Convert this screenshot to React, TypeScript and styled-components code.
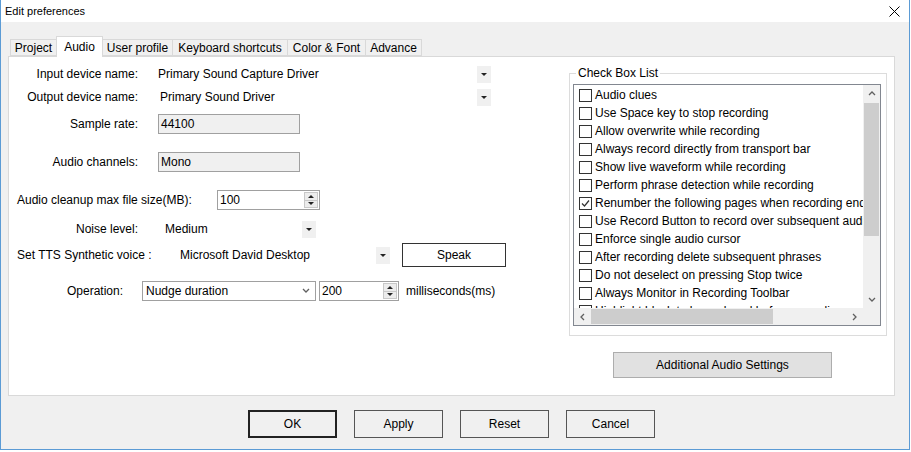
import styled, { createGlobalStyle } from 'styled-components'

const GlobalStyle = createGlobalStyle`
    body {
        margin: 0;
        background: #fff;
        font-family: "Liberation Sans", Arial, sans-serif;
        font-size: 12px;
        color: #000;
    }
`

const checkItems = [
    { label: 'Audio clues', checked: false },
    { label: 'Use Space key to stop recording', checked: false },
    { label: 'Allow overwrite while recording', checked: false },
    { label: 'Always record directly from transport bar', checked: false },
    { label: 'Show live waveform while recording', checked: false },
    { label: 'Perform phrase detection while recording', checked: false },
    { label: 'Renumber the following pages when recording ends', checked: true },
    { label: 'Use Record Button to record over subsequent audio', checked: false },
    { label: 'Enforce single audio cursor', checked: false },
    { label: 'After recording delete subsequent phrases', checked: false },
    { label: 'Do not deselect on pressing Stop twice', checked: false },
    { label: 'Always Monitor in Recording Toolbar', checked: false },
    { label: 'Highlight block to be replaced before recording', checked: false },
]

const tabs = [
    { name: 'Project', width: 47 },
    { name: 'Audio', width: 47, active: true },
    { name: 'User profile', width: 71 },
    { name: 'Keyboard shortcuts', width: 116 },
    { name: 'Color & Font', width: 79 },
    { name: 'Advance', width: 57 },
]

function Tri({ up }: { up?: boolean }) {
    return <Triangle $up={up} />
}

function DropDown({ value, ml, width, pad }: { value: string; ml: number; width: number; pad: number }) {
    return (
        <FlatCombo $ml={ml} $w={width}>
            <FlatText $pad={pad}>{value}</FlatText>
            <ArrowBox>
                <Tri />
            </ArrowBox>
        </FlatCombo>
    )
}

function Spin({ value, ml, width }: { value: string; ml: number; width: number }) {
    return (
        <SpinBox $ml={ml} $w={width}>
            <SpinText>{value}</SpinText>
            <SpinButtons>
                <SpinHalf>
                    <Tri up />
                </SpinHalf>
                <SpinHalf>
                    <Tri />
                </SpinHalf>
            </SpinButtons>
        </SpinBox>
    )
}

function Chevron({ dir }: { dir: 'up' | 'down' | 'left' | 'right' }) {
    const d = {
        up: 'M1 5 L4 2 L7 5',
        down: 'M1 2 L4 5 L7 2',
        left: 'M5 1 L2 4 L5 7',
        right: 'M2 1 L5 4 L2 7',
    }[dir]
    return (
        <svg width='8' height='8' viewBox='0 0 8 8'>
            <path d={d} fill='none' stroke='#606060' strokeWidth='1.3' />
        </svg>
    )
}

export default function App() {
    return (
        <>
            <GlobalStyle />
            <Window>
                <TitleBar>
                    <Title>Edit preferences</Title>
                    <svg width='11' height='11' viewBox='0 0 11 11'>
                        <path d='M0.5 0.5 L10.5 10.5 M10.5 0.5 L0.5 10.5' stroke='#000' strokeWidth='1' />
                    </svg>
                </TitleBar>
                <Body>
                    <TabStrip>
                        {tabs.map((t) => (
                            <Tab key={t.name} $w={t.width} $active={t.active}>
                                {t.name}
                            </Tab>
                        ))}
                    </TabStrip>
                    <Panel>
                        <FormColumn>
                            <Row $mt={0}>
                                <Label $w={129}>Input device name:</Label>
                                <DropDown value='Primary Sound Capture Driver' ml={20} width={334} pad={0} />
                            </Row>
                            <Row $mt={3}>
                                <Label $w={129}>Output device name:</Label>
                                <DropDown value='Primary Sound Driver' ml={20} width={334} pad={2} />
                            </Row>
                            <Row $mt={7}>
                                <Label $w={129}>Sample rate:</Label>
                                <ReadBox $ml={20}>44100</ReadBox>
                            </Row>
                            <Row $mt={18}>
                                <Label $w={129}>Audio channels:</Label>
                                <ReadBox $ml={20}>Mono</ReadBox>
                            </Row>
                            <Row $mt={18}>
                                <Label $w={208} $left>
                                    Audio cleanup max file size(MB):
                                </Label>
                                <Spin value='100' ml={0} width={103} />
                            </Row>
                            <Row $mt={9}>
                                <Label $w={129}>Noise level:</Label>
                                <DropDown value='Medium' ml={20} width={159} pad={7} />
                            </Row>
                            <Row $mt={4} $h={24}>
                                <Label $w={164} $left>
                                    Set TTS Synthetic voice :
                                </Label>
                                <DropDown value='Microsoft David Desktop' ml={0} width={218} pad={7} />
                                <SpeakButton>Speak</SpeakButton>
                            </Row>
                            <Row $mt={14}>
                                <Label $w={114}>Operation:</Label>
                                <SelectBox>
                                    <span>Nudge duration</span>
                                    <Chevron dir='down' />
                                </SelectBox>
                                <Spin value='200' ml={3} width={80} />
                                <Unit>milliseconds(ms)</Unit>
                            </Row>
                        </FormColumn>
                        <SideColumn>
                            <Group>
                                <Legend>Check Box List</Legend>
                                <ListBox>
                                    <Items>
                                        {checkItems.map((item) => (
                                            <Item key={item.label}>
                                                <Box>
                                                    {item.checked && (
                                                        <svg width='11' height='11' viewBox='0 0 11 11'>
                                                            <path d='M2 5.5 L4.5 8 L9 2.5' fill='none' stroke='#333' strokeWidth='1.2' />
                                                        </svg>
                                                    )}
                                                </Box>
                                                <span>{item.label}</span>
                                            </Item>
                                        ))}
                                    </Items>
                                    <VScroll>
                                        <ScrollArrow>
                                            <Chevron dir='up' />
                                        </ScrollArrow>
                                        <VThumb />
                                        <TrackFill />
                                        <ScrollArrow>
                                            <Chevron dir='down' />
                                        </ScrollArrow>
                                    </VScroll>
                                    <HScroll>
                                        <ScrollArrow>
                                            <Chevron dir='left' />
                                        </ScrollArrow>
                                        <HThumb />
                                        <TrackFill />
                                        <ScrollArrow>
                                            <Chevron dir='right' />
                                        </ScrollArrow>
                                    </HScroll>
                                    <Corner />
                                </ListBox>
                            </Group>
                            <WideButton>Additional Audio Settings</WideButton>
                        </SideColumn>
                    </Panel>
                    <ButtonBar>
                        <DialogButton $default>OK</DialogButton>
                        <DialogButton>Apply</DialogButton>
                        <DialogButton>Reset</DialogButton>
                        <DialogButton>Cancel</DialogButton>
                    </ButtonBar>
                </Body>
            </Window>
        </>
    )
}

const Window = styled.div`
    width: 910px;
    height: 450px;
    box-sizing: border-box;
    border: 1px solid #5b9bd5;
    border-top: none;
    background: #f0f0f0;
    display: flex;
    flex-direction: column;
`

const TitleBar = styled.div`
    height: 22px;
    background: #fff;
    display: flex;
    align-items: center;
    justify-content: space-between;
    padding: 0 9px 0 4px;
    flex-shrink: 0;
`

const Title = styled.span`
    font-size: 11px;
`

const Body = styled.div`
    padding: 0 14px 0 7px;
    display: flex;
    flex-direction: column;
`

const TabStrip = styled.div`
    margin-top: 14px;
    height: 20px;
    display: flex;
    align-items: flex-end;
    padding-left: 3px;
    position: relative;
    z-index: 1;
`

const Tab = styled.div<{ $w: number; $active?: boolean }>`
    width: ${(p) => p.$w}px;
    height: ${(p) => (p.$active ? 21 : 17)}px;
    box-sizing: border-box;
    margin-left: -1px;
    border: 1px solid #d9d9d9;
    border-bottom: ${(p) => (p.$active ? 'none' : '1px solid #d9d9d9')};
    background: ${(p) => (p.$active ? '#fff' : '#f0f0f0')};
    display: flex;
    align-items: ${(p) => (p.$active ? 'flex-start' : 'center')};
    padding-top: ${(p) => (p.$active ? '3px' : '0')};
    justify-content: center;
    white-space: nowrap;
    margin-bottom: ${(p) => (p.$active ? '-1px' : '0')};
`

const Panel = styled.div`
    height: 340px;
    box-sizing: border-box;
    background: #fff;
    border: 1px solid #d9d9d9;
    display: flex;
`

const FormColumn = styled.div`
    flex: 1;
    padding-top: 7px;
    display: flex;
    flex-direction: column;
`

const Row = styled.div<{ $mt: number; $h?: number }>`
    display: flex;
    align-items: center;
    height: ${(p) => p.$h ?? 20}px;
    margin-top: ${(p) => p.$mt}px;
    white-space: nowrap;
`

const Label = styled.span<{ $w: number; $left?: boolean }>`
    width: ${(p) => p.$w}px;
    flex-shrink: 0;
    box-sizing: border-box;
    text-align: ${(p) => (p.$left ? 'left' : 'right')};
    padding-left: ${(p) => (p.$left ? '8px' : '0')};
`

const FlatCombo = styled.div<{ $ml: number; $w: number }>`
    margin-left: ${(p) => p.$ml}px;
    width: ${(p) => p.$w}px;
    height: 20px;
    display: flex;
    align-items: center;
    justify-content: space-between;
    flex-shrink: 0;
`

const FlatText = styled.span<{ $pad: number }>`
    padding-left: ${(p) => p.$pad}px;
`

const ArrowBox = styled.div`
    width: 14px;
    height: 17px;
    margin-right: 1px;
    background: #f0f0f0;
    display: flex;
    align-items: center;
    justify-content: center;
`

const Triangle = styled.span<{ $up?: boolean }>`
    width: 0;
    height: 0;
    border-left: 3px solid transparent;
    border-right: 3px solid transparent;
    ${(p) => (p.$up ? 'border-bottom: 3px solid #222;' : 'border-top: 3px solid #222;')}
`

const ReadBox = styled.div<{ $ml: number }>`
    margin-left: ${(p) => p.$ml}px;
    width: 142px;
    height: 20px;
    box-sizing: border-box;
    border: 1px solid #a0a0a0;
    background: #f0f0f0;
    padding-left: 2px;
    display: flex;
    align-items: center;
`

const SpinBox = styled.div<{ $ml: number; $w: number }>`
    margin-left: ${(p) => p.$ml}px;
    width: ${(p) => p.$w}px;
    height: 20px;
    box-sizing: border-box;
    border: 1px solid #a0a0a0;
    background: #fff;
    display: flex;
    align-items: center;
    justify-content: space-between;
    flex-shrink: 0;
`

const SpinText = styled.span`
    padding-left: 2px;
`

const SpinButtons = styled.div`
    width: 14px;
    height: 16px;
    margin-right: 1px;
    display: flex;
    flex-direction: column;
    border: 1px solid #c8c8c8;
    box-sizing: border-box;
`

const SpinHalf = styled.div`
    flex: 1;
    background: #ececec;
    display: flex;
    align-items: center;
    justify-content: center;
    & + & {
        border-top: 1px solid #c8c8c8;
    }
`

const SpeakButton = styled.button`
    margin-left: 11px;
    width: 104px;
    height: 24px;
    background: #fff;
    border: 1px solid #333;
    font: inherit;
    padding: 0;
`

const SelectBox = styled.div`
    margin-left: 19px;
    width: 174px;
    height: 20px;
    box-sizing: border-box;
    border: 1px solid #a0a0a0;
    background: #fff;
    display: flex;
    align-items: center;
    justify-content: space-between;
    padding: 0 5px 0 3px;
    flex-shrink: 0;
`

const Unit = styled.span`
    margin-left: 7px;
`

const SideColumn = styled.div`
    width: 318px;
    margin: 9px 7px 0 0;
    display: flex;
    flex-direction: column;
`

const Group = styled.fieldset`
    margin: 0;
    min-width: 0;
    border: 1px solid #dcdcdc;
    padding: 0 5px 9px 3px;
`

const Legend = styled.legend`
    padding: 0 2px;
    margin-left: 3px;
    line-height: 14px;
`

const ListBox = styled.div`
    margin-top: 4px;
    height: 242px;
    box-sizing: border-box;
    border: 1px solid #828790;
    background: #fff;
    display: grid;
    grid-template-columns: 1fr 17px;
    grid-template-rows: 1fr 17px;
`

const Items = styled.div`
    overflow: hidden;
    padding-top: 1px;
`

const Item = styled.div`
    height: 18px;
    display: flex;
    align-items: center;
    padding-left: 5px;
    gap: 3px;
    white-space: nowrap;
`

const Box = styled.span`
    width: 13px;
    height: 13px;
    box-sizing: border-box;
    border: 1px solid #333;
    background: #fff;
    flex-shrink: 0;
    display: flex;
    align-items: center;
    justify-content: center;
`

const VScroll = styled.div`
    background: #f0f0f0;
    display: flex;
    flex-direction: column;
`

const HScroll = styled.div`
    background: #f0f0f0;
    display: flex;
`

const ScrollArrow = styled.div`
    width: 17px;
    height: 17px;
    flex-shrink: 0;
    display: flex;
    align-items: center;
    justify-content: center;
`

const VThumb = styled.div`
    height: 133px;
    margin: 1px 1px 0;
    background: #cdcdcd;
`

const HThumb = styled.div`
    width: 182px;
    margin: 1px 0;
    background: #cdcdcd;
`

const TrackFill = styled.div`
    flex: 1;
`

const Corner = styled.div`
    background: #f0f0f0;
`

const WideButton = styled.button`
    margin: 16px 0 0 44px;
    width: 219px;
    height: 26px;
    background: #e1e1e1;
    border: 1px solid #adadad;
    font: inherit;
    padding: 0;
`

const ButtonBar = styled.div`
    margin-top: 14px;
    padding-left: 240px;
    display: flex;
    gap: 17px;
`

const DialogButton = styled.button<{ $default?: boolean }>`
    width: 89px;
    height: 28px;
    box-sizing: border-box;
    background: #f0f0f0;
    border: ${(p) => (p.$default ? '2px solid #222' : '1px solid #555')};
    font: inherit;
    padding: 0;
`
